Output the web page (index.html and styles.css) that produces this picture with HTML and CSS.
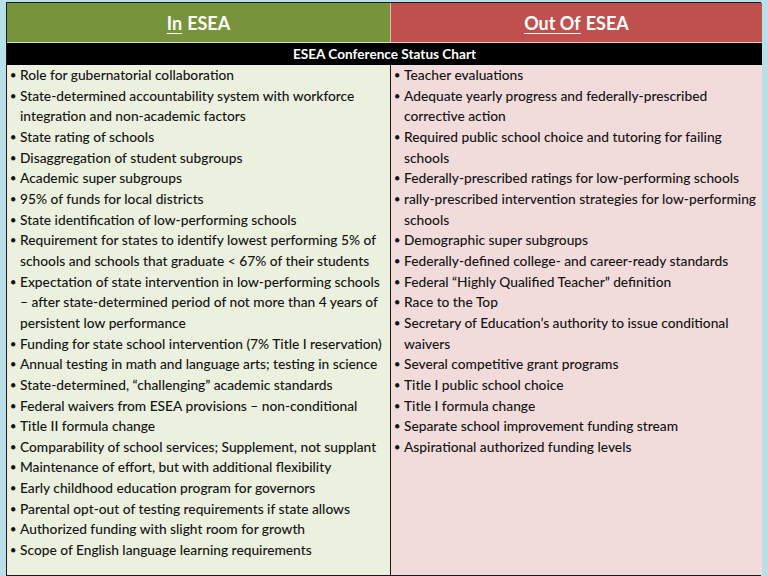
FILE: index.html
```html
<!DOCTYPE html>
<html>
<head>
<meta charset="utf-8">
<link rel="stylesheet" href="styles.css">
</head>
<body>
<div class="chart">
  <div class="head head-in"><span class="u">In</span> ESEA</div>
  <div class="head head-out"><span class="u">Out Of</span> ESEA</div>
  <div class="title">ESEA Conference Status Chart</div>
  <div class="col col-in">
    <ul class="list">
      <li>Role for gubernatorial collaboration</li>
      <li>State-determined accountability system with workforce<br>integration and non-academic factors</li>
      <li>State rating of schools</li>
      <li>Disaggregation of student subgroups</li>
      <li>Academic super subgroups</li>
      <li>95% of funds for local districts</li>
      <li>State identification of low-performing schools</li>
      <li>Requirement for states to identify lowest performing 5% of<br>schools and schools that graduate &lt; 67% of their students</li>
      <li>Expectation of state intervention in low-performing schools<br>– after state-determined period of not more than 4 years of<br>persistent low performance</li>
      <li>Funding for state school intervention (7% Title I reservation)</li>
      <li>Annual testing in math and language arts; testing in science</li>
      <li>State-determined, “challenging” academic standards</li>
      <li>Federal waivers from ESEA provisions – non-conditional</li>
      <li>Title II formula change</li>
      <li>Comparability of school services; Supplement, not supplant</li>
      <li>Maintenance of effort, but with additional flexibility</li>
      <li>Early childhood education program for governors</li>
      <li>Parental opt-out of testing requirements if state allows</li>
      <li>Authorized funding with slight room for growth</li>
      <li>Scope of English language learning requirements</li>
    </ul>
  </div>
  <div class="col col-out">
    <ul class="list">
      <li>Teacher evaluations</li>
      <li>Adequate yearly progress and federally-prescribed<br>corrective action</li>
      <li>Required public school choice and tutoring for failing<br>schools</li>
      <li>Federally-prescribed ratings for low-performing schools</li>
      <li>rally-prescribed intervention strategies for low-performing<br>schools</li>
      <li>Demographic super subgroups</li>
      <li>Federally-defined college- and career-ready standards</li>
      <li>Federal “Highly Qualified Teacher” definition</li>
      <li>Race to the Top</li>
      <li>Secretary of Education’s authority to issue conditional<br>waivers</li>
      <li>Several competitive grant programs</li>
      <li>Title I public school choice</li>
      <li>Title I formula change</li>
      <li>Separate school improvement funding stream</li>
      <li>Aspirational authorized funding levels</li>
    </ul>
  </div>
</div>
</body>
</html>
```

FILE: styles.css
```css
html, body {
  margin: 0;
  padding: 0;
  background: #b9dfe8;
  width: 768px;
  height: 576px;
  overflow: hidden;
}
body {
  padding: 2px 6px 0 6px;
  box-sizing: border-box;
  font-family: Lato, "Open Sans", sans-serif;
}
.chart {
  display: grid;
  grid-template-columns: 384px 371px;
  grid-template-rows: 40px 22px 510px;
  border: 1px solid #1a1a1a;
  width: 755px;
  box-sizing: border-box;
}
.head {
  display: flex;
  align-items: center;
  justify-content: center;
  color: #fff;
  font-weight: bold;
  font-size: 18px;
}
.head-in {
  background: #77933c;
  border-bottom: 1px solid #d7e4bd;
  border-right: 1px solid #e6b9b8;
}
.head-out {
  background: #c0504d;
  border-bottom: 1px solid #f2c4c2;
}
.u {
  text-decoration: underline;
  text-underline-offset: 3px;
  margin-right: 5px;
}
.title {
  grid-column: 1 / 3;
  background: #000;
  color: #fff;
  font-weight: bold;
  font-size: 13.6px;
  display: flex;
  align-items: center;
  justify-content: center;
}
.col {
  padding: 0;
  overflow: visible;
}
.col-in {
  background: #ebf1de;
  border-right: 1px solid #1a1a1a;
}
.col-out {
  background: #f2dcdb;
}
.list {
  list-style: none;
  margin: 0;
  padding: 0 0 0 5px;
  font-size: 13.75px;
  font-weight: 500;
  line-height: 20.65px;
  color: #141414;
  white-space: nowrap;
}
.list li {
  position: relative;
  padding-left: 8px;
}
.list li::before {
  content: "•";
  position: absolute;
  left: -2px;
  top: 0;
  font-size: 11px;
}
```
